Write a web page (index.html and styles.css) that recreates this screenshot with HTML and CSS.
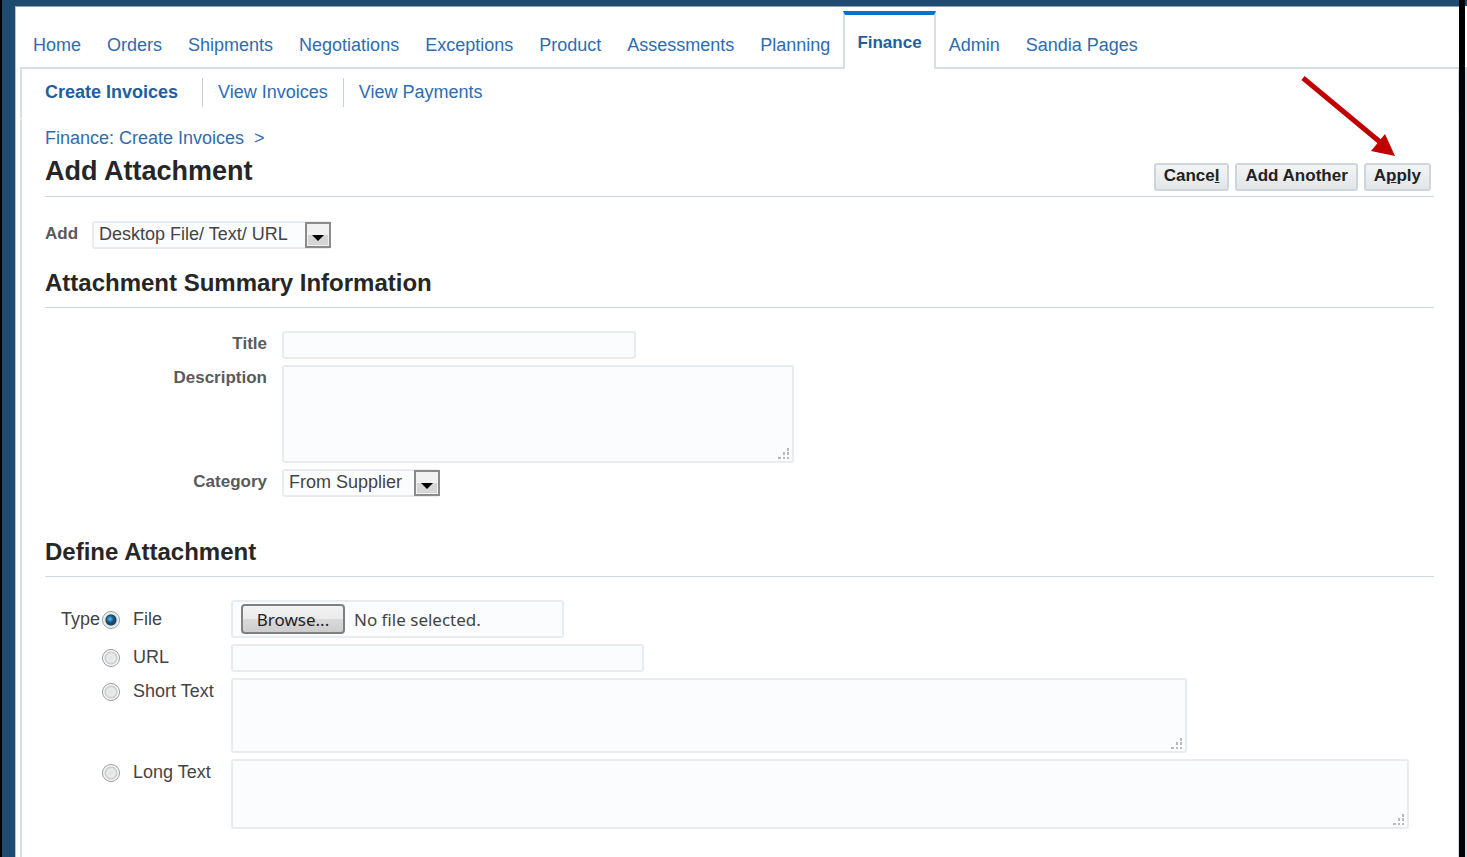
FILE: index.html
```html
<!DOCTYPE html>
<html lang="en">
<head>
    <meta charset="UTF-8">
    <meta name="viewport" content="width=device-width, initial-scale=1.0">
    <title>Add Attachment</title>
    <link rel="stylesheet" href="styles.css">
</head>
<body>
    <div class="frame">
        <div class="window">
            <div class="panel">
                <nav class="tabs">
                    <a href="#">Home</a>
                    <a href="#">Orders</a>
                    <a href="#">Shipments</a>
                    <a href="#">Negotiations</a>
                    <a href="#">Exceptions</a>
                    <a href="#">Product</a>
                    <a href="#">Assessments</a>
                    <a href="#">Planning</a>
                    <a href="#" class="active">Finance</a>
                    <a href="#">Admin</a>
                    <a href="#">Sandia Pages</a>
                </nav>

                <nav class="subtabs">
                    <a href="#" class="active">Create Invoices</a>
                    <a href="#">View Invoices</a>
                    <a href="#">View Payments</a>
                </nav>

                <form class="content">
                    <div class="breadcrumb"><a href="#">Finance: Create Invoices</a><span>&gt;</span></div>

                    <div class="page-header">
                        <h1>Add Attachment</h1>
                        <div class="actions">
                            <button type="button" class="btn">Cance<u>l</u></button>
                            <button type="button" class="btn">Add Another</button>
                            <button type="button" class="btn">A<u>p</u>ply</button>
                            <svg class="pointer" width="94" height="82" viewBox="0 0 94 82" aria-hidden="true">
                                <path d="M2 3 L79 67" stroke="#c00000" stroke-width="5" fill="none"/>
                                <path d="M94 81 L70 76 L84 59 Z" fill="#c00000"/>
                            </svg>
                        </div>
                    </div>

                    <div class="add-row">
                        <label for="add-type">Add</label>
                        <span class="select select-add">
                            <select id="add-type">
                                <option>Desktop File/ Text/ URL</option>
                            </select>
                            <svg class="select-arrow" viewBox="0 0 26 26" aria-hidden="true">
                                <rect x="1" y="1" width="24" height="24" fill="#f1f1f1" stroke="#8a8a8a" stroke-width="2"/>
                                <rect x="3" y="13" width="20" height="10" fill="#d6d6d6"/>
                                <path d="M7 13 H19 L13 19 Z" fill="#000"/>
                            </svg>
                        </span>
                    </div>

                    <h2>Attachment Summary Information</h2>
                    <div class="summary">
                        <label for="title">Title</label>
                        <input type="text" id="title" class="field field-title">

                        <label for="description">Description</label>
                        <div class="area area-description">
                            <textarea id="description" class="field"></textarea>
                            <svg class="grip" viewBox="0 0 12 12" aria-hidden="true">
                                <path d="M9 0h2v3h-2z M5 4h2v3h-2z M9 4h2v3h-2z M0 9h3v2h-3z M5 9h2v2h-2z M9 9h2v2h-2z"/>
                            </svg>
                        </div>

                        <label for="category">Category</label>
                        <span class="select select-category">
                            <select id="category">
                                <option>From Supplier</option>
                            </select>
                            <svg class="select-arrow" viewBox="0 0 26 26" aria-hidden="true">
                                <rect x="1" y="1" width="24" height="24" fill="#f1f1f1" stroke="#8a8a8a" stroke-width="2"/>
                                <rect x="3" y="13" width="20" height="10" fill="#d6d6d6"/>
                                <path d="M7 13 H19 L13 19 Z" fill="#000"/>
                            </svg>
                        </span>
                    </div>

                    <h2>Define Attachment</h2>
                    <div class="define" role="radiogroup" aria-labelledby="type-label">
                        <span id="type-label" class="type-label">Type</span>
                        <input type="radio" name="type" id="type-file" checked>
                        <label for="type-file">File</label>
                        <div class="field file-box">
                            <button type="button" class="browse" id="browse">Browse...</button>
                            <span id="file-name">No file selected.</span>
                            <input type="file" id="file" aria-label="File" hidden>
                        </div>

                        <input type="radio" name="type" id="type-url">
                        <label for="type-url">URL</label>
                        <input type="text" class="field field-url" aria-label="URL">

                        <input type="radio" name="type" id="type-short">
                        <label for="type-short">Short Text</label>
                        <div class="area area-short">
                            <textarea class="field" aria-label="Short Text"></textarea>
                            <svg class="grip" viewBox="0 0 12 12" aria-hidden="true">
                                <path d="M9 0h2v3h-2z M5 4h2v3h-2z M9 4h2v3h-2z M0 9h3v2h-3z M5 9h2v2h-2z M9 9h2v2h-2z"/>
                            </svg>
                        </div>

                        <input type="radio" name="type" id="type-long">
                        <label for="type-long">Long Text</label>
                        <div class="area area-long">
                            <textarea class="field" aria-label="Long Text"></textarea>
                            <svg class="grip" viewBox="0 0 12 12" aria-hidden="true">
                                <path d="M9 0h2v3h-2z M5 4h2v3h-2z M9 4h2v3h-2z M0 9h3v2h-3z M5 9h2v2h-2z M9 9h2v2h-2z"/>
                            </svg>
                        </div>
                    </div>
                </form>
            </div>
        </div>
        <div class="edge"></div>
        <div class="outside"></div>
    </div>

    <script>
        const fileInput = document.getElementById('file');
        const fileName = document.getElementById('file-name');

        document.getElementById('browse').addEventListener('click', () => fileInput.click());

        fileInput.addEventListener('change', () => {
            fileName.textContent = fileInput.files.length ? fileInput.files[0].name : 'No file selected.';
        });
    </script>
</body>
</html>
```

FILE: styles.css
```css
* {
    margin: 0;
    padding: 0;
    box-sizing: border-box;
}

body {
    font-family: "Liberation Sans", Arial, Helvetica, sans-serif;
    font-size: 18px;
    line-height: 22px;
    color: #444;
    background: #fff;
}

a {
    color: #2e6cb0;
    text-decoration: none;
}

a:hover {
    text-decoration: underline;
}

/* Window frame */
.frame {
    display: flex;
    min-height: 100vh;
}

.window {
    flex: 1;
    display: flex;
    background: #1f4b6e;
    border-left: 2px solid #000;
    padding: 6px 0 0 13px;
}

.edge {
    width: 6px;
    background: #000;
}

.outside {
    width: 2px;
    background: linear-gradient(#fff 61px, #d0d9e1 61px);
    border-top: 6px solid #1f4b6e;
}

.panel {
    flex: 1;
    display: flex;
    flex-direction: column;
    background: #fff;
    border-top: 1px solid #8ba3b8;
    border-left: 1px solid #b4c3d0;
    padding: 4px 0 0 4px;
}

/* Navigation */
.tabs {
    display: flex;
    height: 58px;
    border-bottom: 2px solid #d6dfe6;
}

.tabs a {
    padding: 23px 13px 0;
    white-space: nowrap;
}

.tabs a.active {
    height: 58px;
    padding: 17px 12px 0;
    background: #fff;
    border: 2px solid #d6dfe6;
    border-top: 4px solid #0572ce;
    border-bottom: none;
    font-size: 17px;
    font-weight: bold;
    color: #1f5f9f;
}

.subtabs {
    display: flex;
    align-items: center;
    height: 49px;
    padding: 0 0 2px 23px;
    border-left: 2px solid #d6dfe6;
    border-right: 1px solid #d6dfe6;
}

.subtabs a {
    padding: 3px 15px 4px;
    border-left: 1px solid #c4d0dc;
}

.subtabs a.active {
    padding: 3px 24px 4px 0;
    border-left: none;
    font-weight: bold;
    color: #1f5f9f;
}

/* Content */
.content {
    flex: 1;
    margin-top: 1px;
    padding: 8px 24px 24px 23px;
    border-left: 2px solid #d6dfe6;
    border-right: 1px solid #d6dfe6;
}

.breadcrumb {
    display: flex;
    gap: 10px;
    color: #2e6cb0;
}

.page-header {
    display: flex;
    justify-content: space-between;
    align-items: flex-start;
    height: 48px;
    padding-top: 6px;
    border-bottom: 1px solid #ccd9e3;
}

h1 {
    font-size: 27px;
    line-height: 32px;
    color: #262626;
}

h2 {
    padding-bottom: 10px;
    border-bottom: 1px solid #ccd9e3;
    font-size: 24px;
    line-height: 28px;
    color: #262626;
}

.actions {
    position: relative;
    display: flex;
    gap: 6px;
    padding: 8px 3px 0 0;
}

.btn {
    height: 28px;
    padding: 0 8px 2px;
    border: 2px solid #ccd6de;
    border-radius: 3px;
    background: linear-gradient(#f3f4f5, #e2e6e9);
    font: bold 17px "Liberation Sans", Arial, sans-serif;
    color: #222;
    cursor: pointer;
}

.pointer {
    position: absolute;
    right: 39px;
    bottom: 34px;
    pointer-events: none;
}

.add-row {
    display: flex;
    gap: 14px;
    margin: 24px 0 20px;
}

.add-row label,
.summary label {
    padding-top: 2px;
    font-size: 17px;
    font-weight: bold;
    color: #5a5a5a;
}

/* Fields */
.field,
.select select {
    border: 2px solid #e8ecef;
    border-radius: 3px;
    background: #fbfcfe;
    font: 18px "Liberation Sans", Arial, sans-serif;
    color: #444;
    max-width: 100%;
}

input.field {
    height: 28px;
    padding: 0 6px;
}

.select {
    display: grid;
    height: 28px;
}

.select select {
    grid-area: 1 / 1;
    appearance: none;
    width: 100%;
    height: 28px;
    padding: 0 26px 2px 5px;
}

.select-arrow {
    grid-area: 1 / 1;
    justify-self: end;
    align-self: center;
    width: 26px;
    height: 26px;
    pointer-events: none;
}

.area {
    position: relative;
    max-width: 100%;
}

.area textarea {
    display: block;
    width: 100%;
    height: 100%;
    padding: 4px 6px;
    resize: none;
}

.grip {
    position: absolute;
    right: 4px;
    bottom: 3px;
    width: 12px;
    height: 12px;
    fill: #b8b8b8;
}

.select-add {
    width: 239px;
}

.select-category {
    width: 158px;
}

.field-title {
    width: 354px;
}

.field-url {
    width: 413px;
}

.area-description {
    width: 512px;
    height: 98px;
}

.area-short {
    width: 956px;
    height: 75px;
}

.area-long {
    width: 1178px;
    height: 70px;
}

.summary {
    display: grid;
    grid-template-columns: 222px 1fr;
    gap: 6px 15px;
    margin: 23px 0 41px;
}

.summary label {
    text-align: right;
}

.define {
    display: grid;
    grid-template-columns: 41px 31px 98px 1fr;
    align-items: start;
    row-gap: 6px;
    margin-top: 23px;
    padding-left: 16px;
}

.define label,
.type-label {
    padding-top: 2px;
}

.define .type-label,
.type-label ~ label[for="type-file"] {
    padding-top: 8px;
}

input[type="radio"] {
    grid-column: 2;
    appearance: none;
    width: 18px;
    height: 18px;
    margin-top: 5px;
    border: 1px solid #989898;
    border-radius: 50%;
    background: radial-gradient(circle, #e0e2e4 0, #ececec 4px, #c6c9cc 6px, #f8f8f8 7px, #fff 8px);
}

input[type="radio"]:checked {
    background: radial-gradient(circle at 7px 7px, #6fc6ea 0, #2b86b8 2px, transparent 4px),
        radial-gradient(circle, #174c70 4px, #1d4059 5px, #d4dce1 6px, #fff 8px);
}

#type-file {
    margin-top: 11px;
}

.file-box {
    display: flex;
    align-items: center;
    gap: 9px;
    width: 333px;
    height: 38px;
    padding: 0 8px;
    font: 17px "Noto Sans", "Open Sans", sans-serif;
}

.browse {
    width: 104px;
    height: 30px;
    border: 2px solid #808080;
    border-radius: 4px;
    background: linear-gradient(#f3f3f3 0, #ebebeb 50%, #dadada 50%, #cdcdcd 100%);
    font: 17px "Noto Sans", "Open Sans", sans-serif;
    color: #222;
}
```
